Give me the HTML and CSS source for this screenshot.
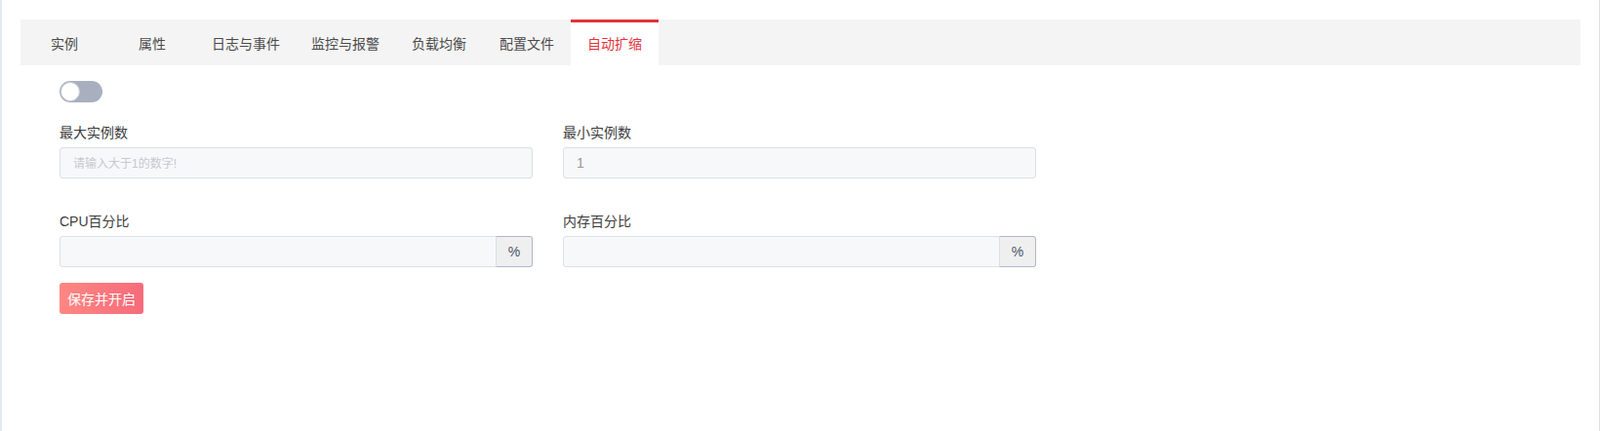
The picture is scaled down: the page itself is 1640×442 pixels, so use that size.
FILE: index.html
```html
<!DOCTYPE html>
<html lang="zh-CN">
<head>
<meta charset="utf-8">
<title>自动扩缩</title>
<link rel="stylesheet" href="styles.css">
</head>
<body>
<div class="page">
  <nav class="tabs">
    <a class="tab">实例</a>
    <a class="tab">属性</a>
    <a class="tab">日志与事件</a>
    <a class="tab">监控与报警</a>
    <a class="tab">负载均衡</a>
    <a class="tab">配置文件</a>
    <a class="tab active">自动扩缩</a>
  </nav>
  <div class="content">
    <div class="switch"><span class="knob"></span></div>
    <div class="form">
      <div class="field">
        <label class="label">最大实例数</label>
        <input class="input" type="text" placeholder="请输入大于1的数字!">
      </div>
      <div class="field">
        <label class="label">最小实例数</label>
        <input class="input" type="text" value="1">
      </div>
      <div class="field">
        <label class="label">CPU百分比</label>
        <div class="group">
          <input class="input grow" type="text">
          <span class="addon">%</span>
        </div>
      </div>
      <div class="field">
        <label class="label">内存百分比</label>
        <div class="group">
          <input class="input grow" type="text">
          <span class="addon">%</span>
        </div>
      </div>
    </div>
    <button class="btn">保存并开启</button>
  </div>
</div>
</body>
</html>
```
FILE: styles.css
```css
* { box-sizing: border-box; }
html, body { margin: 0; padding: 0; background: #fff; }
body {
  font-family: "Liberation Sans", "Noto Sans CJK SC", sans-serif;
  font-size: 14px;
  color: #333;
}
.page {
  height: 442px;
  border-left: 2px solid #e1e9f3;
  border-right: 1px solid #dcdfe4;
  padding: 20px 19px 0 19px;
}
.tabs {
  display: flex;
  background: #f4f4f4;
  height: 47px;
}
.tab {
  min-width: 90px;
  padding: 0 16px;
  display: flex;
  align-items: center;
  justify-content: center;
  color: #4a4a4a;
  font-size: 14px;
  border-top: 3px solid transparent;
  padding-bottom: 2px;
}
.tab.active {
  background: #fff;
  color: #e2323c;
  border-top-color: #e2323c;
}
.content {
  padding: 16px 0 0 40px;
}
.switch {
  width: 44px;
  height: 22px;
  border-radius: 11px;
  background: #a8b0bf;
  display: flex;
  align-items: center;
  padding-left: 1px;
}
.knob {
  width: 20px;
  height: 20px;
  border-radius: 50%;
  background: #fff;
  border: 1px solid #c8cdd6;
}
.form {
  display: grid;
  grid-template-columns: 485px 485px;
  column-gap: 31px;
  row-gap: 34px;
  margin-top: 21px;
}
.label {
  display: block;
  line-height: 20px;
  height: 20px;
  margin-bottom: 5px;
  color: #3c3c3c;
}
.input {
  display: block;
  width: 100%;
  height: 32px;
  border: 1px solid #dcdfe4;
  border-radius: 3px;
  background: #f7f8fa;
  padding: 0 13px;
  font-family: "Liberation Sans", "Noto Sans CJK SC", sans-serif;
  font-size: 14px;
  color: #999;
  outline: none;
}
.input::placeholder {
  color: #c6c9ce;
  font-size: 12px;
}
.group {
  display: flex;
}
.input.grow {
  flex: 1;
  border-radius: 3px 0 0 3px;
}
.addon {
  width: 38px;
  height: 32px;
  display: flex;
  align-items: center;
  justify-content: center;
  background: #efefef;
  border: 1px solid #b0b9c7;
  border-left: 1px solid #dcdfe4;
  border-radius: 0 3px 3px 0;
  color: #4a5468;
  font-size: 14px;
  margin-left: -1px;
}
.btn {
  margin-top: 16px;
  height: 32px;
  padding: 0 8px;
  border: none;
  border-radius: 3px;
  background: linear-gradient(90deg, #fe8782, #f66b7b);
  color: #fff;
  font-family: "Liberation Sans", "Noto Sans CJK SC", sans-serif;
  font-size: 14px;
}
```
